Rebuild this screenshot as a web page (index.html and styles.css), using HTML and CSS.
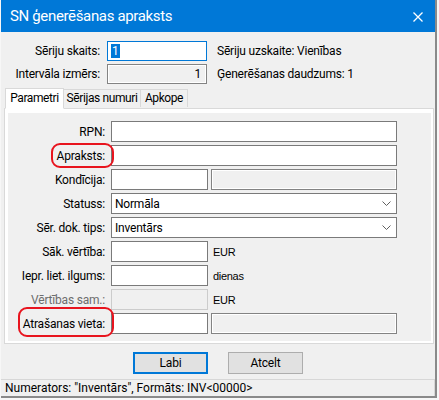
FILE: index.html
```html
<!DOCTYPE html>
<html lang="lv">
<head>
<meta charset="utf-8">
<title>SN ģenerēšanas apraksts</title>
<link rel="stylesheet" href="styles.css">
</head>
<body>
<div class="window">
  <div class="titlebar">
    <span class="title">SN ģenerēšanas apraksts</span>
    <svg class="close" width="10" height="10" viewBox="0 0 10 10"><path d="M0.5 0.5 L9.5 9.5 M9.5 0.5 L0.5 9.5" stroke="#fff" stroke-width="1.3" fill="none"/></svg>
  </div>

  <div class="top-grid">
    <span class="lbl">Sēriju skaits:</span>
    <div class="field focused"><span class="sel">1</span></div>
    <span class="info">Sēriju uzskaite: Vienības</span>
    <span class="lbl">Intervāla izmērs:</span>
    <div class="field readonly num">1</div>
    <span class="info">Ģenerēšanas daudzums: 1</span>
  </div>

  <div class="tabs">
    <div class="tab active tab-param">Parametri</div>
    <div class="tab tab-ser">Sērijas numuri</div>
    <div class="tab tab-apk">Apkope</div>
  </div>

  <div class="page">
    <div class="inner">
      <div class="row"><span class="rlbl">RPN:</span><div class="field wide"></div></div>
      <div class="row"><span class="rlbl">Apraksts:</span><div class="field wide"></div></div>
      <div class="row"><span class="rlbl">Kondīcija:</span><div class="field short"></div><div class="field readonly rest"></div></div>
      <div class="row"><span class="rlbl">Statuss:</span><div class="field wide select">Normāla<svg class="chev" width="9" height="5" viewBox="0 0 9 5"><path d="M0.5 0.5 L4.5 4.5 L8.5 0.5" stroke="#606060" stroke-width="1" fill="none"/></svg></div></div>
      <div class="row"><span class="rlbl">Sēr. dok. tips:</span><div class="field wide select">Inventārs<svg class="chev" width="9" height="5" viewBox="0 0 9 5"><path d="M0.5 0.5 L4.5 4.5 L8.5 0.5" stroke="#606060" stroke-width="1" fill="none"/></svg></div></div>
      <div class="row"><span class="rlbl">Sāk. vērtība:</span><div class="field short"></div><span class="unit">EUR</span></div>
      <div class="row"><span class="rlbl">Iepr. liet. ilgums:</span><div class="field short"></div><span class="unit">dienas</span></div>
      <div class="row"><span class="rlbl disabled">Vērtības sam.:</span><div class="field short disabledfield"></div><span class="unit">EUR</span></div>
      <div class="row"><span class="rlbl">Atrašanas vieta:</span><div class="field short"></div><div class="field readonly rest"></div></div>
    </div>
  </div>

  <div class="buttons">
    <div class="btn default">Labi</div>
    <div class="btn">Atcelt</div>
  </div>

  <div class="statusbar"><span class="status-text">Numerators: "Inventārs", Formāts: INV&lt;00000&gt;</span></div>

  <div class="mark mark-apraksts"></div>
  <div class="mark mark-vieta"></div>
</div>
</body>
</html>
```
FILE: styles.css
```css
html, body {
  margin: 0;
  padding: 0;
}
body {
  background: #f7f7f7;
  padding-left: 1px;
  font-family: Roboto, "Liberation Sans", sans-serif;
  font-size: 12px;
  letter-spacing: -0.2px;
  color: #000;
}
.window {
  position: relative;
  width: 436px;
  height: 398px;
  box-sizing: border-box;
  background: #f0f0f0;
  border-right: 2px solid #8a8a8a;
  border-bottom: 2px solid #8a8a8a;
  display: flex;
  flex-direction: column;
}
.titlebar {
  height: 32px;
  flex: none;
  background: #0078d7;
  display: flex;
  align-items: center;
  justify-content: space-between;
  padding: 0 12px 0 9px;
}
.title {
  color: #fff;
  font-size: 15px;
  letter-spacing: -0.35px;
  line-height: 20px;
  margin-top: -1px;
}
.close {
  display: block;
  margin-top: 1px;
}
.top-grid {
  display: grid;
  grid-template-columns: 99px 100px auto;
  grid-auto-rows: 20px;
  column-gap: 7px;
  row-gap: 3px;
  padding-top: 9px;
  align-items: center;
}
.lbl {
  text-align: right;
  white-space: nowrap;
}
.info {
  margin-left: 3px;
  white-space: nowrap;
}
.field {
  box-sizing: border-box;
  height: 21px;
  border: 1px solid #7a7a7a;
  background: #fff;
  display: flex;
  align-items: center;
  padding: 0 3px;
  white-space: nowrap;
}
.top-grid .field {
  height: 20px;
}
.field.focused {
  border-color: #0078d7;
}
.sel {
  background: #0078d7;
  color: #fff;
  line-height: 14px;
  padding: 0 1px;
}
.field.readonly {
  background: #f0f0f0;
  box-shadow: inset 0 0 0 1px #fff;
  border-color: #838383;
}
.field.num {
  justify-content: flex-end;
  padding-right: 5px;
}
.tabs {
  display: flex;
  align-items: flex-end;
  height: 20px;
  margin-top: 4px;
  padding-left: 4px;
  position: relative;
  z-index: 1;
}
.tab {
  box-sizing: border-box;
  height: 18px;
  border: 1px solid #d9d9d9;
  border-bottom: none;
  background: #f0f0f0;
  line-height: 16px;
  margin-bottom: 1px;
  white-space: nowrap;
  text-align: center;
  letter-spacing: -0.4px;
}
.tab + .tab {
  border-left: none;
}
.tab-param {
  width: 59px;
}
.tab-ser {
  width: 77px;
}
.tab-apk {
  width: 47px;
}
.tab.active {
  height: 21px;
  background: #fff;
  line-height: 19px;
  border-bottom: 1px solid #fff;
  margin-bottom: -1px;
}
.page {
  margin: 0 1px 0 3px;
  height: 236px;
  box-sizing: border-box;
  border: 1px solid #d9d9d9;
  background: #fff;
  padding: 4px 2px 2px 3px;
}
.inner {
  background: #f0f0f0;
  height: 100%;
  box-sizing: border-box;
  padding-top: 8px;
  display: flex;
  flex-direction: column;
  gap: 3px;
}
.row {
  display: flex;
  align-items: center;
  height: 21px;
}
.rlbl {
  width: 97px;
  text-align: right;
  margin-right: 6px;
  white-space: nowrap;
}
.rlbl.disabled {
  color: #6d6d6d;
}
.wide {
  width: 286px;
}
.short {
  width: 97px;
}
.rest {
  width: 186px;
  margin-left: 3px;
}
.select {
  justify-content: space-between;
  padding-right: 5px;
}
.chev {
  display: block;
}
.disabledfield {
  background: #f0f0f0;
  border-color: #cccccc;
}
.unit {
  margin-left: 5px;
  font-family: "Liberation Sans", Arial, sans-serif;
  font-size: 11px;
  letter-spacing: -0.3px;
}
.buttons {
  display: flex;
  justify-content: center;
  gap: 20px;
  padding-top: 8px;
  height: 35px;
  box-sizing: border-box;
}
.btn {
  box-sizing: border-box;
  width: 75px;
  height: 22px;
  border: 1px solid #adadad;
  background: #e1e1e1;
  display: flex;
  align-items: center;
  justify-content: center;
}
.btn.default {
  border-color: #0078d7;
  box-shadow: inset 0 0 0 1px #0078d7;
}
.statusbar {
  flex: 1;
  border-top: 1px solid #d7d7d7;
  display: flex;
  align-items: center;
}
.status-text {
  flex: 1;
  padding-left: 4px;
  font-size: 12px;
  letter-spacing: 0;
  border-right: 1px solid #d7d7d7;
  height: 100%;
  display: flex;
  align-items: center;
}
.mark {
  position: absolute;
  border: 2px solid #e8141e;
  border-radius: 9px;
  box-sizing: border-box;
  pointer-events: none;
}
.mark-apraksts {
  left: 50px;
  top: 143px;
  width: 63px;
  height: 25px;
}
.mark-vieta {
  left: 17px;
  top: 307px;
  width: 96px;
  height: 30px;
}
```
